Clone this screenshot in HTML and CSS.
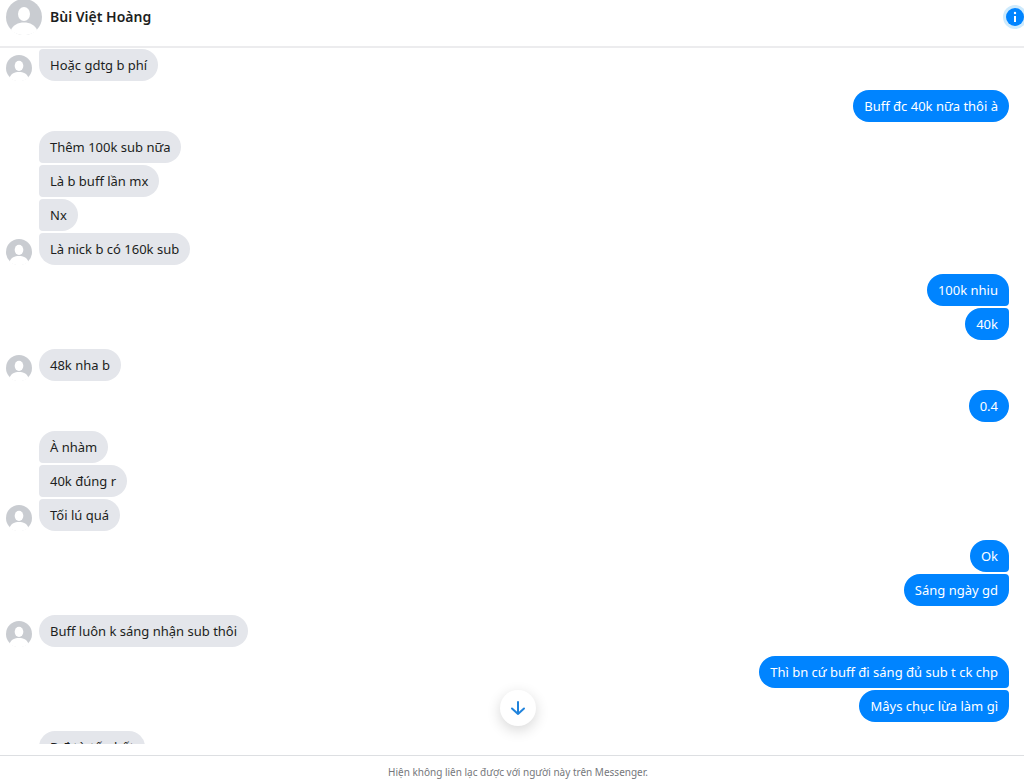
FILE: index.html
```
<!DOCTYPE html>
<html lang="vi">
<head>
    <meta charset="UTF-8">
    <meta name="viewport" content="width=device-width, initial-scale=1.0">
    <title>Messenger</title>
    <link rel="stylesheet" href="styles.css">
</head>
<body>
    <svg class="sprite" aria-hidden="true">
        <symbol id="person" viewBox="0 0 36 36">
            <circle cx="18" cy="18" r="18" fill="#c9ccd1"/>
            <ellipse cx="18" cy="15" rx="6" ry="7" fill="#fff"/>
            <path d="M5 31c2-5 7-7.500 13-7.500S29 26 31 31c-3 3.500-8 5-13 5s-10-1.500-13-5z" fill="#fff"/>
        </symbol>
    </svg>

    <header class="chat-header">
        <svg class="avatar-large"><use href="#person"/></svg>
        <h1>Bùi Việt Hoàng</h1>
        <button type="button" class="info-button" aria-label="Thông tin">
            <svg viewBox="0 0 24 24" width="24" height="24">
                <circle cx="12" cy="12" r="12" fill="#cdeafd"/>
                <circle cx="12" cy="12" r="9" fill="#0084ff"/>
                <circle cx="12" cy="8" r="1.200" fill="#fff"/>
                <path d="M12 11v6" stroke="#fff" stroke-width="2"/>
            </svg>
        </button>
    </header>

    <main class="chat">
        <div class="messages">
            <div class="group received continued">
                <svg class="avatar"><use href="#person"/></svg>
                <p class="bubble">Hoặc gdtg b phí</p>
            </div>
            <div class="group sent">
                <p class="bubble">Buff đc 40k nữa thôi à</p>
            </div>
            <div class="group received">
                <svg class="avatar"><use href="#person"/></svg>
                <p class="bubble">Thêm 100k sub nữa</p>
                <p class="bubble">Là b buff lần mx</p>
                <p class="bubble">Nx</p>
                <p class="bubble">Là nick b có 160k sub</p>
            </div>
            <div class="group sent">
                <p class="bubble">100k nhiu</p>
                <p class="bubble">40k</p>
            </div>
            <div class="group received">
                <svg class="avatar"><use href="#person"/></svg>
                <p class="bubble">48k nha b</p>
            </div>
            <div class="group sent">
                <p class="bubble">0.4</p>
            </div>
            <div class="group received">
                <svg class="avatar"><use href="#person"/></svg>
                <p class="bubble">À nhàm</p>
                <p class="bubble">40k đúng r</p>
                <p class="bubble">Tối lú quá</p>
            </div>
            <div class="group sent">
                <p class="bubble">Ok</p>
                <p class="bubble">Sáng ngày gd</p>
            </div>
            <div class="group received">
                <svg class="avatar"><use href="#person"/></svg>
                <p class="bubble">Buff luôn k sáng nhận sub thôi</p>
            </div>
            <div class="group sent">
                <p class="bubble">Thì bn cứ buff đi sáng đủ sub t ck chp</p>
                <p class="bubble">Mâys chục lừa làm gì</p>
            </div>
            <div class="group received">
                <p class="bubble">B đ từ tốn hết</p>
            </div>
        </div>
        <button type="button" class="scroll-button" aria-label="Cuộn xuống">
            <svg viewBox="0 0 16 16" width="16" height="16">
                <path d="M8 2v12M2 8.500l6 5.500 6-5.500" fill="none" stroke="#2083dc" stroke-width="2" stroke-linecap="round" stroke-linejoin="round"/>
            </svg>
        </button>
    </main>

    <footer class="chat-footer">Hiện không liên lạc được với người này trên Messenger.</footer>
</body>
</html>
```

FILE: styles.css
```
* {
    box-sizing: border-box;
}

body {
    margin: 0;
    height: 100vh;
    display: flex;
    flex-direction: column;
    overflow: hidden;
    background: #fff;
    color: #1c1e21;
    font-family: "Noto Sans", "Open Sans", sans-serif;
    font-size: 13px;
    line-height: 20px;
}

button {
    padding: 0;
    border: none;
    background: none;
    cursor: pointer;
}

.sprite {
    position: absolute;
    width: 0;
    height: 0;
}

.chat-header {
    flex: none;
    display: flex;
    align-items: center;
    gap: 8px;
    height: 48px;
    padding: 0 0 12px 6px;
    border-bottom: 2px solid #ececee;
}

.chat-header h1 {
    flex: 1;
    margin: 0;
    font-size: 14px;
    font-weight: 600;
}

.avatar-large {
    flex: none;
    width: 36px;
    height: 36px;
}

.info-button {
    height: 24px;
    margin-right: -3px;
}

.chat {
    position: relative;
    flex: 1;
    min-height: 0;
    padding-bottom: 11px;
}

.messages {
    display: flex;
    flex-direction: column;
    gap: 9px;
    height: 100%;
    padding: 1px 15px 0 0;
    overflow: hidden;
}

.group {
    position: relative;
    flex: none;
    display: flex;
    flex-direction: column;
    align-items: flex-start;
    gap: 2px;
    padding-left: 39px;
}

.sent {
    align-items: flex-end;
}

.avatar {
    position: absolute;
    left: 6px;
    bottom: 0;
    width: 26px;
    height: 26px;
}

.bubble {
    margin: 0;
    padding: 6px 11px;
    border-radius: 16px;
    background: #e4e6eb;
}

.sent .bubble {
    background: #0084ff;
    color: #fff;
}

.received .bubble:not(:last-child) {
    border-bottom-left-radius: 4px;
}

.received .bubble + .bubble,
.continued .bubble {
    border-top-left-radius: 4px;
}

.sent .bubble:not(:last-child) {
    border-bottom-right-radius: 4px;
}

.sent .bubble + .bubble {
    border-top-right-radius: 4px;
}

.scroll-button {
    position: absolute;
    left: 50%;
    bottom: 29px;
    display: flex;
    align-items: center;
    justify-content: center;
    width: 36px;
    height: 36px;
    margin-left: -12px;
    border-radius: 50%;
    background: #fff;
    box-shadow: 0 4px 14px rgba(0, 0, 0, 0.16);
}

.chat-footer {
    flex: none;
    padding: 6px 0 0 12px;
    border-top: 1px solid #dddfe2;
    color: #75777b;
    font-size: 10px;
    text-align: center;
}
```
